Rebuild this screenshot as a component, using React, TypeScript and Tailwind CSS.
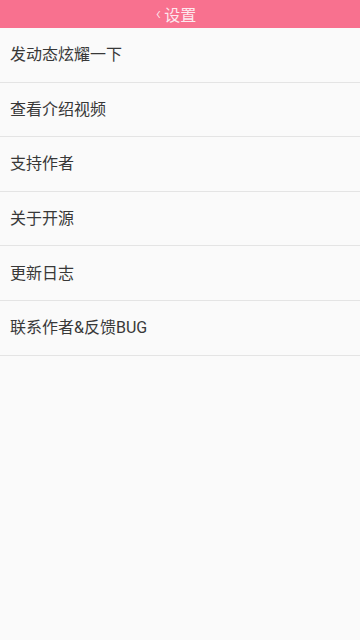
import React from "react";

const items = ["发动态炫耀一下", "查看介绍视频", "支持作者", "关于开源", "更新日志", "联系作者&反馈BUG"];

export default function App() {
  return (
    <div
      className="w-[360px] h-[640px] bg-[#fafafa] flex flex-col"
      style={{ fontFamily: '"Roboto", "Noto Sans CJK SC", sans-serif' }}
    >
      <div className="h-[28px] bg-[#f8718f] flex items-center justify-center pr-[8px] pt-[4px] text-[#fde8ee]">
        <span className="text-[18px] font-light leading-none mr-[3px] -mt-[5px]">‹</span>
        <span className="text-[16px] leading-none">设置</span>
      </div>
      {items.map((t) => (
        <div
          key={t}
          className="h-[54.6px] border-b border-[#e4e4e4] flex items-center pl-[10px] pt-[1px] text-[16px] text-[#383838]"
        >
          {t}
        </div>
      ))}
    </div>
  );
}
